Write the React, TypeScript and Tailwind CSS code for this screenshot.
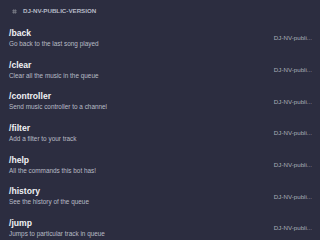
const commands = [
  { name: "/back", desc: "Go back to the last song played" },
  { name: "/clear", desc: "Clear all the music in the queue" },
  { name: "/controller", desc: "Send music controller to a channel" },
  { name: "/filter", desc: "Add a filter to your track" },
  { name: "/help", desc: "All the commands this bot has!" },
  { name: "/history", desc: "See the history of the queue" },
  { name: "/jump", desc: "Jumps to particular track in queue" },
];

export default function App() {
  return (
    <div className="w-[320px] h-[240px] overflow-hidden bg-[#2c2d40] font-['Liberation_Sans',Arial,sans-serif]">
      {/* Bot header */}
      <div className="h-[22px] flex items-center gap-[6px] pl-[12px]">
        <svg width="5" height="5" viewBox="0 0 5 5" className="text-[#7d818c]">
          <path d="M1.7 0.3v4.4M3.3 0.3v4.4M0.3 1.7h4.4M0.3 3.3h4.4" stroke="currentColor" strokeWidth="0.8" />
        </svg>
        <span className="text-[6.2px] font-bold text-[#b5b9c6]">DJ-NV-PUBLIC-VERSION</span>
      </div>

      {/* Command rows */}
      <div className="flex flex-col">
        {commands.map((c) => (
          <div key={c.name} className="h-[31.7px] flex items-center justify-between pl-[9px] pr-[8px]">
            <div className="flex flex-col gap-[2px]">
              <span className="text-[8.6px] leading-[10px] font-bold text-[#f0f1f4]">{c.name}</span>
              <span className="text-[6.4px] leading-[8px] text-[#b8bcc6]">{c.desc}</span>
            </div>
            <span className="whitespace-nowrap text-[6.2px] text-[#a9adb8]">DJ-NV-publi...</span>
          </div>
        ))}
      </div>
    </div>
  );
}
